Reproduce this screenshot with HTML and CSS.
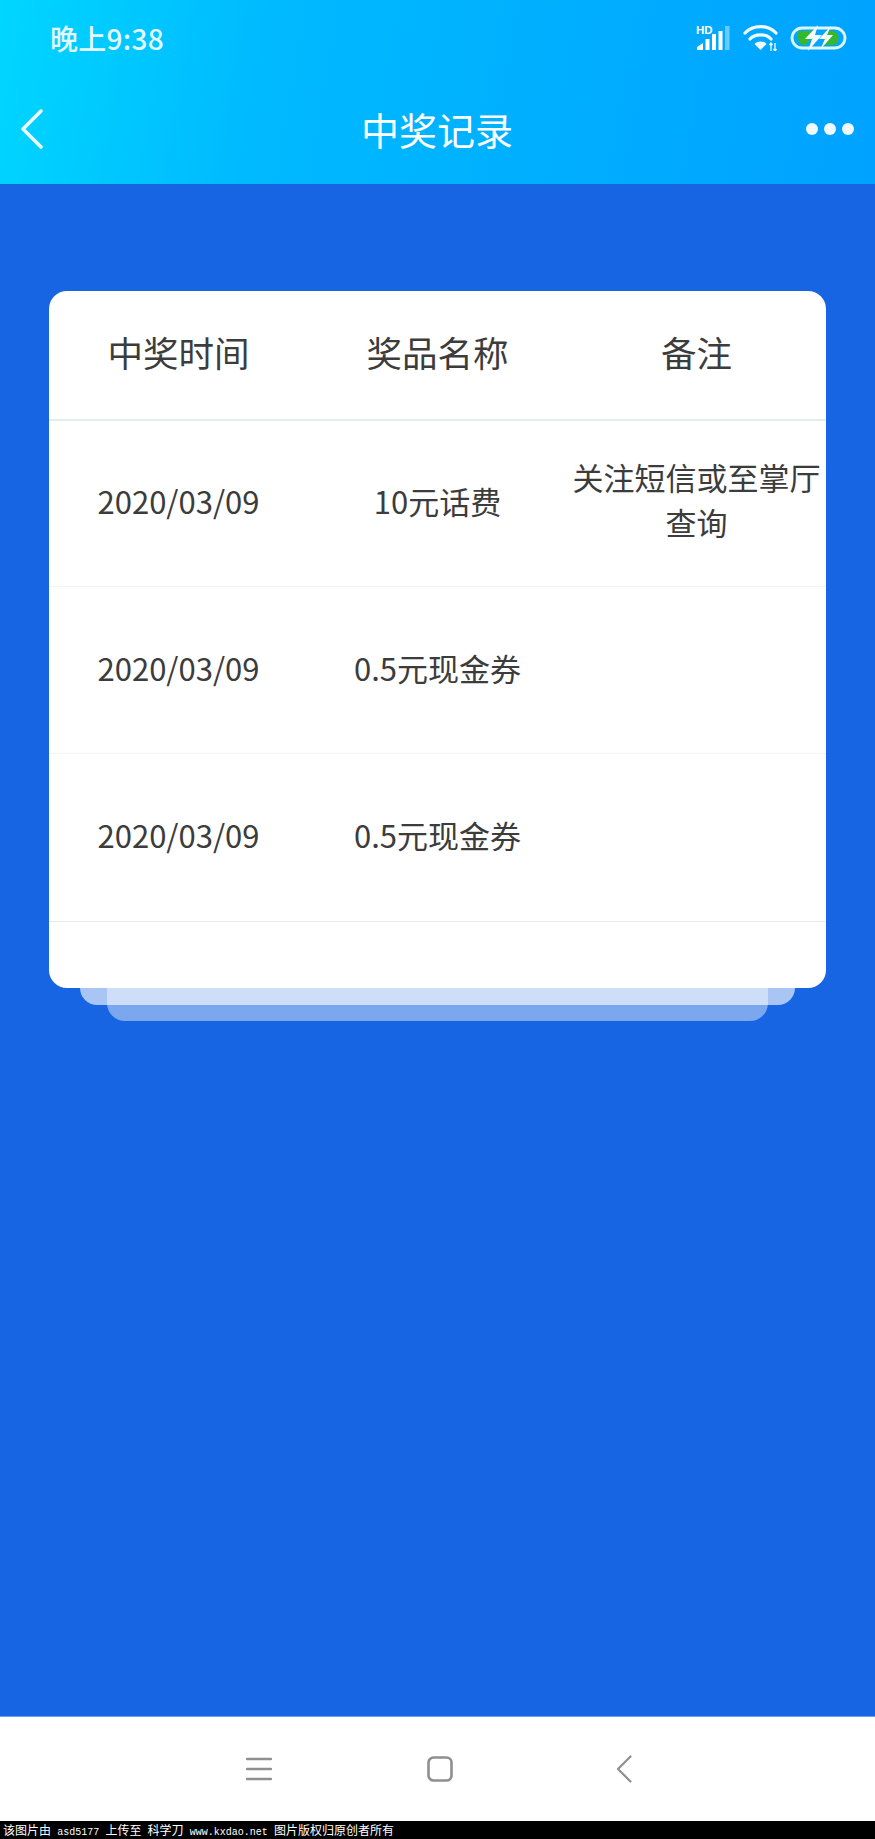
FILE: index.html
```html
<!DOCTYPE html>
<html lang="zh-CN">
<head>
<meta charset="utf-8">
<title>中奖记录</title>
<link rel="stylesheet" href="styles.css">
</head>
<body>
<div class="page">
  <header class="top">
    <div class="status">
      <span class="clock">晚上9:38</span>
      <div class="status-icons">
        <svg class="ic-signal" width="36" height="27" viewBox="0 0 36 27">
          <text x="0" y="9" class="hd">HD</text>
          <path d="M1 25V22L7 18V25Z" fill="#fff"/>
          <rect x="9.500" y="14" width="4" height="11" fill="#fff"/>
          <rect x="16" y="9" width="4" height="16" fill="#fff"/>
          <rect x="22.500" y="6" width="4" height="19" fill="#fff"/>
          <rect x="29" y="1" width="4.500" height="24" fill="#fff" opacity=".4"/>
        </svg>
        <svg class="ic-wifi" width="36" height="26" viewBox="0 0 36 26">
          <g fill="none" stroke="#f2fbff" stroke-width="3.200" stroke-linecap="round">
            <path d="M2 8C10 -.5 25 -.5 33 8"/>
            <path d="M7 14C12 8.500 23 8.500 28 14"/>
          </g>
          <path d="M11.500 19C14 15.500 21 15.500 23.500 19L17.500 25Z" fill="#f2fbff"/>
          <path d="M28 18V26M26.500 20L28 18L29.500 20M32 18V26M30.500 24L32 26L33.500 24" fill="none" stroke="#f2fbff" stroke-width="1.300"/>
        </svg>
        <svg class="ic-bat" width="57" height="26" viewBox="0 0 57 26">
          <rect x="2" y="3" width="53" height="20" rx="10" fill="none" stroke="#dff6ff" stroke-width="2.800"/>
          <path d="M9 6H26L16 20H12C7 18 7 9 9 6Z" fill="#35b82e"/>
          <path d="M37 6H44C50 8 50 18 44 20H32Z" fill="#35b82e"/>
          <path d="M28 0L15 14H22L18 26L32 10H25Z" fill="#f4fcff"/>
          <path d="M41 1L29 14H35L30 25L43 10H37Z" fill="#f4fcff"/>
        </svg>
      </div>
    </div>
    <nav class="bar">
      <svg class="back" width="24" height="40" viewBox="0 0 24 40">
        <path d="M21 2L3 20L21 38" fill="none" stroke="#f0fbff" stroke-width="3.500" stroke-linecap="round" stroke-linejoin="round"/>
      </svg>
      <h1 class="title">中奖记录</h1>
      <div class="dots"><i></i><i></i><i></i></div>
    </nav>
  </header>

  <main class="main">
    <section class="card">
      <div class="row head">
        <div>中奖时间</div><div>奖品名称</div><div>备注</div>
      </div>
      <div class="row">
        <div>2020/03/09</div><div>10元话费</div><div class="note">关注短信或至掌厅查询</div>
      </div>
      <div class="row mid">
        <div>2020/03/09</div><div>0.5元现金券</div><div></div>
      </div>
      <div class="row last">
        <div>2020/03/09</div><div>0.5元现金券</div><div></div>
      </div>
    </section>
    <div class="layer-a"><div class="layer-b"></div></div>
  </main>

  <footer class="sysnav">
    <svg class="nav-menu" width="26" height="24" viewBox="0 0 26 24">
      <path d="M1 2H25M1 12H25M1 22H25" stroke="#8f8f8f" stroke-width="2.400" stroke-linecap="round"/>
    </svg>
    <svg class="nav-home" width="26" height="26" viewBox="0 0 26 26">
      <rect x="1.500" y="1.500" width="23" height="23" rx="5" fill="none" stroke="#8f8f8f" stroke-width="2.600"/>
    </svg>
    <svg class="nav-back" width="16" height="28" viewBox="0 0 16 28">
      <path d="M14.500 1.500L2 14L14.500 26.500" fill="none" stroke="#8f8f8f" stroke-width="2.200" stroke-linecap="round" stroke-linejoin="round"/>
    </svg>
  </footer>

  <div class="credit">该图片由 <span class="latin">asd5177</span> 上传至 科学刀 <span class="latin">www.kxdao.net</span> 图片版权归原创者所有</div>
</div>
</body>
</html>
```

FILE: styles.css
```css
* { box-sizing: border-box; }
html, body { margin: 0; padding: 0; }
body {
  font-family: "Noto Sans CJK SC", "Noto Sans", sans-serif;
  background: #1765e3;
}
.page {
  width: 875px;
  height: 1839px;
  display: flex;
  flex-direction: column;
  overflow: hidden;
}

.top {
  height: 184px;
  flex: none;
  background: linear-gradient(100deg, #00d6ff 0%, #00baff 30%, #00a2ff 100%);
  color: #fff;
}
.status {
  height: 78px;
  display: flex;
  align-items: center;
  justify-content: space-between;
  padding: 0 28px 0 50px;
}
.clock {
  font-size: 28px;
  line-height: 40px;
  margin-bottom: 2px;
  font-weight: 500;
  letter-spacing: .3px;
  color: #e4f8ff;
}
.status-icons { display: flex; align-items: center; gap: 11px; margin-bottom: 2px; }
.hd { font: 700 11.500px "Liberation Sans", sans-serif; fill: #fff; }
.bar {
  height: 106px;
  padding: 0 21px 4px 20px;
  display: grid;
  grid-template-columns: 1fr auto 1fr;
  align-items: center;
}
.title {
  margin: 0;
  font-size: 38px;
  line-height: 50px;
  font-weight: 400;
  color: #fff;
}
.dots { display: flex; gap: 6px; justify-content: flex-end; }
.dots i {
  display: block;
  width: 12px;
  height: 12px;
  border-radius: 50%;
  background: #f0f9ff;
}

.main {
  flex: 1;
  padding: 107px 49px 0;
}
.card {
  height: 697px;
  background: #fff;
  border-radius: 18px;
  overflow: hidden;
  position: relative;
  z-index: 1;
}
.row {
  display: grid;
  grid-template-columns: repeat(3, 1fr);
  align-items: center;
  height: 166px;
  padding-bottom: 6px;
  border-bottom: 1px solid #f2f5f8;
  font-size: 31px;
  line-height: 45px;
  color: #3c3c3c;
  text-align: center;
}
.row.head {
  height: 130px;
  font-size: 35.500px;
  padding-bottom: 8px;
  border-bottom: 2px solid #e3edf0;
}
.note { margin-bottom: 4px; }
.row.mid {
  height: 167px;
  padding-bottom: 5px;
}
.row.last {
  height: 168px;
  padding-bottom: 6px;
  border-bottom-color: #e6ebf0;
}

.layer-a {
  height: 17px;
  margin: 0 31px;
  background: #a9c5f3;
  border-radius: 0 0 18px 18px;
}
.layer-b {
  height: 33px;
  margin: 0 27px;
  background: rgba(255, 255, 255, .43);
  border-radius: 0 0 18px 18px;
}

.sysnav {
  height: 105px;
  flex: none;
  background: #fff;
  border-top: 1px solid #6fa0ec;
  display: flex;
  align-items: center;
  padding-left: 246px;
}
.nav-home { margin-left: 155px; }
.nav-back { margin-left: 163px; }

.credit {
  height: 18px;
  flex: none;
  background: #000;
  color: #fff;
  font-size: 12px;
  line-height: 18px;
  padding-left: 3px;
  white-space: pre;
  word-spacing: 3.500px;
}
.latin { font-family: "Liberation Mono", monospace; font-size: 10px; }
```
